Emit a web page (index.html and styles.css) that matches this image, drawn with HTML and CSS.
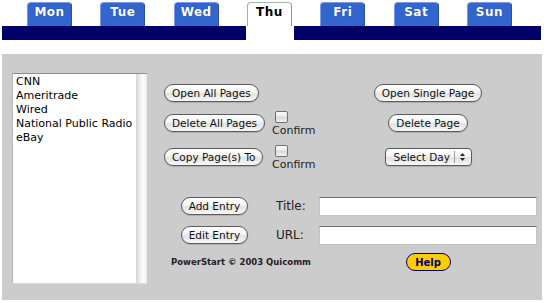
FILE: index.html
```html
<!DOCTYPE html>
<html>
<head>
  <meta charset="UTF-8">
  <title>PowerStart</title>
  <link rel="stylesheet" href="styles.css">
</head>
<body>
  <div class="tabs">
    <a class="tab">Mon</a>
    <a class="tab">Tue</a>
    <a class="tab">Wed</a>
    <a class="tab active">Thu</a>
    <a class="tab">Fri</a>
    <a class="tab">Sat</a>
    <a class="tab">Sun</a>
  </div>
  <div class="tab-bar">
    <div class="bar-left"></div>
    <div class="bar-gap"></div>
    <div class="bar-right"></div>
  </div>

  <div class="panel">
    <!-- saved pages -->
    <div class="listbox">
      <ul class="sites">
        <li>CNN</li>
        <li>Ameritrade</li>
        <li>Wired</li>
        <li>National Public Radio</li>
        <li>eBay</li>
      </ul>
      <div class="scroll"></div>
    </div>

    <div class="controls">
      <button class="btn col-a">Open All Pages</button>
      <button class="btn col-c">Open Single Page</button>

      <button class="btn col-a drop">Delete All Pages</button>
      <label class="confirm"><input type="checkbox"><span>Confirm</span></label>
      <button class="btn col-c drop">Delete Page</button>

      <button class="btn col-a drop">Copy Page(s) To</button>
      <label class="confirm"><input type="checkbox"><span>Confirm</span></label>
      <div class="select col-c drop">
        <span class="select-text">Select Day</span>
        <span class="select-arrows">
          <svg width="7" height="10" viewBox="0 0 7 10"><path d="M3.5 1 L6 4 L1 4 Z" fill="#222"/><path d="M1 6 L6 6 L3.5 9 Z" fill="#222"/></svg>
        </span>
      </div>

      <button class="btn col-a center">Add Entry</button>
      <span class="field-label">Title:</span>
      <input class="field" type="text">

      <button class="btn col-a center">Edit Entry</button>
      <span class="field-label">URL:</span>
      <input class="field" type="text">

      <div class="credit">PowerStart &copy; 2003 Quicomm</div>
      <button class="help col-c">Help</button>
    </div>
  </div>
</body>
</html>
```

FILE: styles.css
```css
body {
  margin: 0;
  background: #fff;
  font-family: "DejaVu Sans", Verdana, sans-serif;
}

/* day tabs */
.tabs {
  display: flex;
  gap: 28.33px;
  padding: 2px 0 0 27px;
  height: 24px;
}

.tab {
  width: 45px;
  height: 24px;
  box-sizing: border-box;
  background: #3366cc;
  border: 1px solid #7799ee;
  border-right-color: #2a4fa8;
  border-bottom: none;
  border-radius: 4px 4px 0 0;
  color: #fff;
  font-weight: bold;
  font-size: 12px;
  letter-spacing: 0.5px;
  text-align: center;
  line-height: 19px;
  text-shadow: 0 0 1px #1a3a8a;
}

.tab.active {
  background: #fff;
  color: #000;
  border-color: #a3b3a3;
  border-right-color: #8a9a8a;
  text-shadow: none;
}

.tab-bar {
  display: flex;
  height: 14px;
  margin: 0 3px 0 2px;
}

.bar-left { width: 244px; background: #000066; }
.bar-gap { width: 48px; }
.bar-right { flex: 1; background: #000066; }

/* main panel */
.panel {
  display: flex;
  align-items: flex-start;
  height: 246px;
  margin: 14px 2px 0 2px;
  padding: 19px 0 0 10px;
  box-sizing: border-box;
  background: #cccccc;
}

.listbox {
  display: flex;
  width: 135px;
  height: 211px;
  box-sizing: border-box;
  background: #fff;
  border-top: 1px solid #8c8c8c;
  border-left: 1px solid #b5b5b5;
  border-bottom: 1px solid #dcdcdc;
}

.sites {
  flex: 1;
  list-style: none;
  margin: 0;
  padding: 1px 3px;
  font-size: 11px;
  line-height: 14px;
  color: #000;
}

.scroll {
  width: 11px;
  background: linear-gradient(to right, #d4d4d4, #efefef 35%, #fdfdfd 65%, #ececec);
}

.controls {
  display: grid;
  grid-template-columns: 101px 54px 218px;
  grid-template-rows: 27px 34px 52px 29px 27px 18px;
  align-items: start;
  margin: 11px 0 0 17px;
}

.col-a { grid-column: 1; justify-self: start; }
.col-c { grid-column: 3; justify-self: center; }
.col-a.center { justify-self: center; }
.drop { margin-top: 3px; }

.btn {
  height: 18px;
  padding: 0 7px;
  border: 1px solid #5a5a5a;
  border-radius: 9px;
  background: linear-gradient(#ffffff, #f4f4f4 45%, #e2e2e2 55%, #f7f7f7);
  box-shadow: 0 1px 1px rgba(0, 0, 0, 0.15);
  font-family: "DejaVu Sans", Verdana, sans-serif;
  font-size: 10.5px;
  color: #111;
  line-height: 16px;
  white-space: nowrap;
}

.confirm {
  grid-column: 2;
  display: flex;
  flex-direction: column;
  align-items: flex-start;
  font-size: 11px;
  line-height: 12px;
  color: #222;
}

.confirm input {
  appearance: none;
  width: 13px;
  height: 12px;
  margin: 0 0 2px 10px;
  border: 1px solid #707070;
  border-radius: 2px;
  background: linear-gradient(#fdfdfd, #e6e6e6 50%, #d6d6d6 51%, #f4f4f4);
}

.confirm span {
  padding-left: 7px;
}

.select {
  display: flex;
  align-items: center;
  width: 87px;
  height: 18px;
  box-sizing: border-box;
  border: 1px solid #5a5a5a;
  border-radius: 4px;
  background: linear-gradient(#ffffff, #f4f4f4 45%, #e2e2e2 55%, #f7f7f7);
  box-shadow: 0 1px 1px rgba(0, 0, 0, 0.15);
  font-size: 10.5px;
  color: #111;
}

.select-text {
  flex: 1;
  padding-left: 8px;
  border-right: 1px solid #9a9a9a;
  line-height: 12px;
}

.select-arrows {
  display: flex;
  width: 16px;
  justify-content: center;
}

.field-label {
  grid-column: 2;
  padding-left: 11px;
  font-size: 12px;
  line-height: 19px;
  color: #222;
}

.field {
  grid-column: 3;
  width: 218px;
  height: 19px;
  box-sizing: border-box;
  margin: 0;
  border: 1px solid #c4c4c4;
  border-top-color: #6f6f6f;
  background: #fff;
}

.credit {
  grid-column: 1 / span 2;
  padding-left: 7px;
  font-size: 8.5px;
  font-weight: bold;
  line-height: 18px;
  color: #222;
  white-space: nowrap;
}

.help {
  width: 45px;
  height: 18px;
  padding: 0;
  border: 1px solid #000066;
  border-radius: 9px;
  background: #ffcc00;
  font-family: "DejaVu Sans", Verdana, sans-serif;
  font-size: 10px;
  font-weight: bold;
  color: #000066;
}
```
